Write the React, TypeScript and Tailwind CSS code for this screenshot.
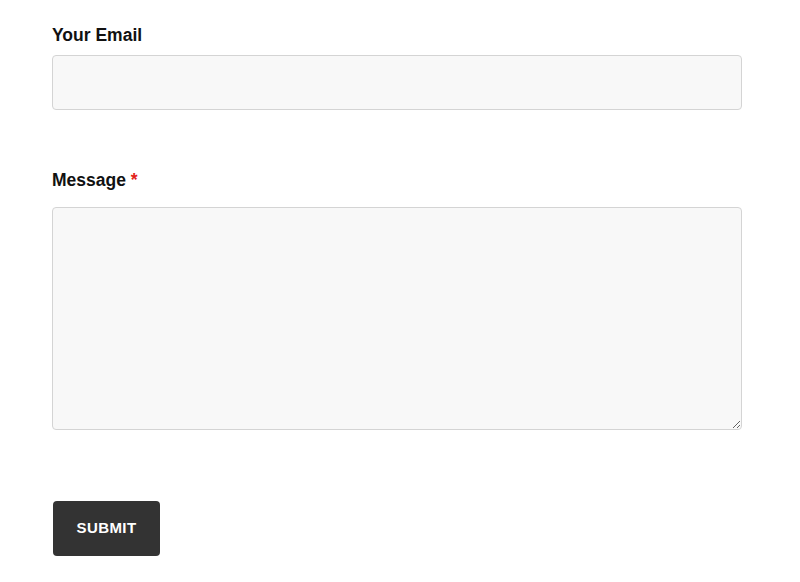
export default function App() {
  return (
    <div className="min-h-screen bg-white font-['Liberation_Sans',Arial,sans-serif] text-[#111]">
      <form className="pl-[52px] pr-[58px] pt-[25px]" onSubmit={(e) => e.preventDefault()}>
        {/* Email */}
        <label className="block text-[17.5px] font-bold leading-[20px]">Your Email</label>
        <input
          type="email"
          className="mt-[10px] block h-[55px] w-full rounded-[4px] border border-[#d4d4d4] bg-[#f8f8f8] px-3 outline-none"
        />

        {/* Message */}
        <label className="mt-[60px] block text-[17.5px] font-bold leading-[20px]">
          Message <span className="text-[#e2231a]">*</span>
        </label>
        <textarea
          className="mt-[17px] block h-[223px] w-full rounded-[4px] border border-[#d4d4d4] bg-[#f8f8f8] px-3 py-2 outline-none"
        />

        <button
          type="submit"
          className="mt-[71px] ml-px flex h-[55px] w-[107px] items-center justify-center rounded-[4px] bg-[#333] text-[15px] font-bold uppercase tracking-[0.4px] text-white"
        >
          Submit
        </button>
      </form>
    </div>
  );
}
